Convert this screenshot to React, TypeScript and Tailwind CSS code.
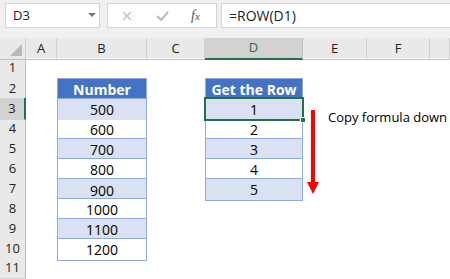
import React from "react";

const cols = "grid-cols-[26px_31px_90px_58px_98px_64px_63px_20px]";

type Cell = { text?: string; kind?: "head" | "odd" | "even" | "sel" | "none" };

export default function App() {
  const bVals = ["500", "600", "700", "800", "900", "1000", "1100", "1200"];
  const dVals = ["1", "2", "3", "4", "5"];
  const rows = Array.from({ length: 11 }, (_, i) => i + 1);

  const tableCell = (c: Cell, edge: string) => {
    if (!c.kind || c.kind === "none") return <div className="h-full" />;
    if (c.kind === "head")
      return (
        <div className={`h-full bg-[#4472c4] border-x border-t border-[#8ea9db] flex items-center justify-center text-white font-bold text-[14px] ${edge}`}>
          {c.text}
        </div>
      );
    const bg = c.kind === "odd" || c.kind === "sel" ? "bg-[#d9e1f2]" : "bg-white";
    return (
      <div className={`h-full ${bg} border-x border-t border-[#8ea9db] flex items-center justify-center text-[14px] text-black ${edge}`}>
        {c.text}
      </div>
    );
  };

  return (
    <div className="w-[450px] h-[279px] bg-white overflow-hidden relative" style={{ fontFamily: '"Open Sans", "Liberation Sans", sans-serif' }}>
      {/* Formula bar */}
      <div className="h-[38px] bg-[#f0f0f0] flex items-start pt-[3px] pl-[5px]">
        <div className="w-[95px] h-[25px] bg-white border border-[#d4d4d4] flex items-center justify-between pl-[7px] pr-[3px] text-[13px] text-[#222]">
          <span>D3</span>
          <svg width="8" height="5" viewBox="0 0 8 5"><path d="M0 0 L8 0 L4 4 Z" fill="#777" /></svg>
        </div>
        <div className="w-[110px] h-[25px] ml-[7px] bg-white border border-[#d4d4d4] flex items-center">
          <svg className="ml-[14px]" width="10" height="10" viewBox="0 0 10 10">
            <path d="M1 1 L9 9 M9 1 L1 9" stroke="#bdbdbd" strokeWidth="1.4" />
          </svg>
          <svg className="ml-[24px]" width="13" height="10" viewBox="0 0 13 10">
            <path d="M1 5 L5 9 L12 1" stroke="#bdbdbd" strokeWidth="2.2" fill="none" />
          </svg>
          <span className="ml-[22px] italic text-[14px] text-[#555] leading-none" style={{ fontFamily: '"Liberation Serif", serif' }}>
            f<span className="text-[11px]">x</span>
          </span>
        </div>
        <div className="flex-1 h-[25px] ml-[4px] bg-white border border-[#d4d4d4] border-r-0 flex items-center pl-[7px] text-[14px] text-[#222]">
          =ROW(D1)
        </div>
      </div>

      {/* Column headers */}
      <div className={`grid ${cols} h-[20px] bg-[#e9e9e9] text-[13px] text-[#222]`}>
        <div className="relative border-r border-[#d0d0d0] border-b border-b-[#bdbdbd]">
          <svg className="absolute right-[3px] bottom-[3px]" width="12" height="12" viewBox="0 0 12 12">
            <path d="M12 0 L12 12 L0 12 Z" fill="#b8b8b8" />
          </svg>
        </div>
        {["A", "B", "C", "D", "E", "F", ""].map((l) =>
          l === "D" ? (
            <div key={l} className="bg-[#d2d2d2] border-r border-[#c0c0c0] border-b-2 border-b-[#217346] flex items-center justify-center text-[#217346]">
              {l}
            </div>
          ) : (
            <div key={l || "g"} className="border-r border-[#d0d0d0] border-b border-b-[#bdbdbd] flex items-center justify-center">
              {l}
            </div>
          )
        )}
      </div>

      {/* Rows */}
      {rows.map((r) => {
        const bIdx = r - 3;
        let bCell: Cell = {};
        if (r === 2) bCell = { text: "Number", kind: "head" };
        else if (bIdx >= 0 && bIdx < bVals.length) bCell = { text: bVals[bIdx], kind: bIdx % 2 === 0 ? "odd" : "even" };
        let dCell: Cell = {};
        if (r === 2) dCell = { text: "Get the Row", kind: "head" };
        else if (bIdx >= 0 && bIdx < dVals.length) dCell = { text: dVals[bIdx], kind: bIdx % 2 === 0 ? "odd" : "even" };
        const bEdge = r === 10 ? "border-b" : "";
        const dEdge = r === 7 ? "border-b" : "";
        return (
          <div key={r} className={`grid ${cols} h-[20px] ${r === 3 ? "relative z-10" : ""}`}>
            <div
              className={`flex items-center justify-center text-[13px] text-[#222] border-b border-[#d4d4d4] ${
                r === 3 ? "bg-[#d2d2d2] border-r-2 border-r-[#217346]" : "bg-[#e9e9e9] border-r border-r-[#bdbdbd]"
              }`}
            >
              {r}
            </div>
            <div />
            <div>{tableCell(bCell, bEdge)}</div>
            <div />
            <div className="relative">
              {tableCell(dCell, dEdge)}
              {r === 3 && (
                <div className="absolute -left-[1px] -top-[1px] -right-[1px] -bottom-[1px] border-2 border-[#217346] z-10">
                  <div className="absolute -right-[4px] -bottom-[4px] w-[6px] h-[6px] bg-[#217346] border border-white" />
                </div>
              )}
            </div>
            <div />
            <div />
            <div />
          </div>
        );
      })}

      {/* Red arrow and label */}
      <div className="absolute left-[307px] top-[110px] w-[12px] h-[84px]">
        <div className="absolute left-[4px] top-0 w-[4px] h-[73px] bg-[#ff0000]" />
        <svg className="absolute left-0 top-[72px]" width="12" height="12" viewBox="0 0 12 12">
          <path d="M0 0 L12 0 L6 12 Z" fill="#ff0000" />
        </svg>
      </div>
      <div className="absolute left-[328px] top-[108px] text-[13px] text-black leading-[18px]">Copy formula down</div>
    </div>
  );
}
